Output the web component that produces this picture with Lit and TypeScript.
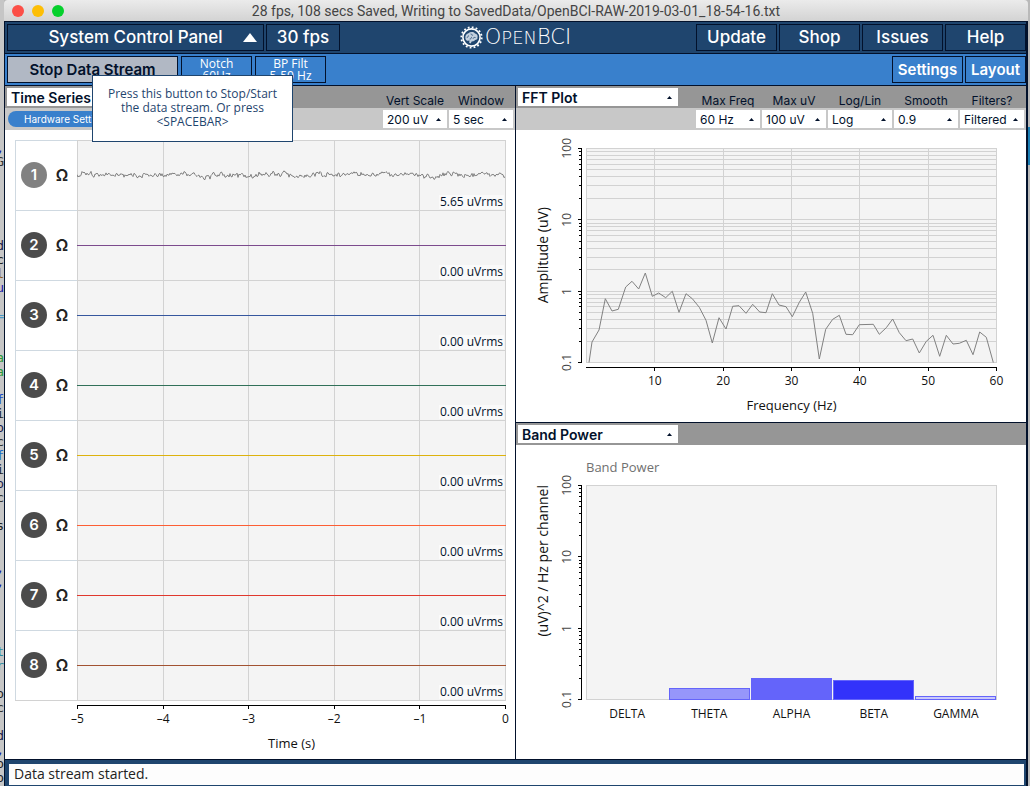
import { LitElement, html, svg, css, nothing } from "lit";
import { customElement } from "lit/decorators.js";

const shared = css`
  :host {
    --ink: #02112b;
    --navy: #1f456e;
    --blue: #3980cc;
    --rule: #d2d2d2;
    --display: Inter, "Open Sans", sans-serif;
    --body: "Open Sans", "Noto Sans", sans-serif;
    box-sizing: border-box;
  }
  *, *::before, *::after { box-sizing: border-box; }
  button, select { font: inherit; color: inherit; margin: 0; border-radius: 0; }
  svg { display: block; }
  .bar {
    display: flex;
    justify-content: space-between;
    height: 22px;
    padding: 2px;
    background: #969696;
    font: 12px/22px var(--display);
    color: var(--ink);
  }
  .bar.low { background: #c8c8c8; }
  .group { display: flex; gap: 2px; }
  .group label { width: 64px; text-align: center; line-height: 25px; white-space: nowrap; }
  .pick { display: grid; width: 64px; height: 18px; background: #fff; }
  .pick select {
    grid-area: 1 / 1;
    width: 100%;
    height: 18px;
    padding: 1px 0 0 4px;
    border: 0;
    background: none;
    appearance: none;
    font: 12px/17px var(--display);
  }
  .pick.wide { width: 160px; }
  .pick.wide select { font: 600 14px/17px var(--display); }
  .pick svg { grid-area: 1 / 1; place-self: center end; margin-right: 6px; pointer-events: none; }
  .ticks { display: flex; justify-content: space-between; font: 500 12px/16px var(--body); color: #111; }
  .ticks span { display: flex; justify-content: center; width: 1px; white-space: nowrap; }
  .axis-title { text-align: center; font: 13px/16px var(--body); color: #111; white-space: nowrap; }
  .plot { width: 100%; height: 100%; min-height: 0; overflow: hidden; }
  .chart {
    flex: 1;
    min-height: 0;
    display: grid;
    grid-template-columns: 24px 19px 8px minmax(0, 1fr);
    grid-template-rows: minmax(0, 1fr) auto;
    padding: 18px 29px 9px 19px;
  }
  .vertical { writing-mode: vertical-rl; transform: rotate(180deg); }
  .chart .axis-title.vertical { width: 16px; place-self: center start; font-size: 14px; }
  .y-ticks {
    display: flex;
    flex-direction: column;
    justify-content: space-between;
    width: 16px;
    font: 12px/16px var(--body);
    color: #444;
  }
  .y-ticks div { display: flex; align-items: center; height: 1px; }
  .below { grid-column: 4; display: flex; flex-direction: column; }
  .below .ruler { width: 100%; height: 4px; margin: 4px 0 2px; }
  .below .axis-title { margin-top: 8px; }
`;

const caret = html`<svg width="5" height="3" viewBox="0 0 5 3"><path d="M0 3 L2.5 0 L5 3z" fill="#02112b"/></svg>`;

const pick = (id: string, name: string, options: string[], wide = false) => html`
  <div class="pick ${wide ? "wide" : ""}">
    <select id=${id} aria-label=${name}>${options.map((o) => html`<option>${o}</option>`)}</select>
    ${caret}
  </div>`;

const WIDGETS = ["Time Series", "FFT Plot", "Band Power"];
const widgetPick = (current: string) =>
  pick("widget", "Widget", [current, ...WIDGETS.filter((w) => w !== current)], true);

const PLOT_W = 410;
const PLOT_H = 214;
const logY = (v: number) => 0.5 + (PLOT_H * (2 - Math.log10(v))) / 3;
const logSteps: { y: number; major: boolean }[] = [];
for (const decade of [0.1, 1, 10]) {
  for (let n = 1; n < 10; n++) logSteps.push({ y: logY(decade * n), major: n === 1 });
}
logSteps.push({ y: logY(100), major: true });

const logAxis = html`
  <div class="y-ticks">
    ${["100", "10", "1", "0.1"].map((t) => html`<div><span class="vertical">${t}</span></div>`)}
  </div>
  <svg width="4" height="100%" viewBox="0 0 4 215" preserveAspectRatio="none" shape-rendering="crispEdges" stroke="#000">
    <line x1="3.5" x2="3.5" y1="0" y2="215"/>
    ${logSteps.map((s) => svg`<line x1=${s.major ? 0 : 1} x2="4" y1=${s.y} y2=${s.y}/>`)}
  </svg>`;

const ruler = (width: number, at: number[]) => html`
  <svg class="ruler" viewBox="0 0 ${width} 4" preserveAspectRatio="none" shape-rendering="crispEdges" stroke="#000">
    <line x1="0" x2=${width} y1="0.5" y2="0.5"/>
    ${at.map((x) => svg`<line x1=${x} x2=${x} y1="0" y2="4"/>`)}
  </svg>`;

const CHANNELS = [
  { color: "#818181", rms: "5.65", on: true },
  { color: "#7c4b8d", rms: "0.00" },
  { color: "#36579e", rms: "0.00" },
  { color: "#317159", rms: "0.00" },
  { color: "#ddb20d", rms: "0.00" },
  { color: "#fd5e34", rms: "0.00" },
  { color: "#e0382d", rms: "0.00" },
  { color: "#a25231", rms: "0.00" },
];

const noise = (() => {
  let seed = 7;
  const rnd = () => {
    seed = (seed * 1103515245 + 12345) % 2147483648;
    return seed / 2147483648 - 0.5;
  };
  const pts: string[] = [];
  let drift = 0;
  for (let x = 0; x <= 428; x += 1) {
    drift = drift * 0.7 + rnd() * 3;
    const start = x > 2 && x < 14 ? -1.5 : 0;
    pts.push(`${x},${(34 + start + drift + rnd() * 3.4).toFixed(1)}`);
  }
  return pts.join(" ");
})();

@customElement("time-series")
export class TimeSeries extends LitElement {
  static styles = [shared, css`
    :host { display: flex; flex-direction: column; min-height: 0; background: #fff; }
    .hardware {
      width: 130px;
      height: 16px;
      margin: 1px;
      padding: 0 0 0 16px;
      border: 0;
      border-radius: 8px;
      background: var(--blue);
      color: #fff;
      font: 10px/16px var(--display);
      text-align: left;
    }
    .body { flex: 1; min-height: 0; display: flex; flex-direction: column; padding: 10px 9px 8px 10px; }
    .rows { flex: 1; min-height: 0; display: flex; flex-direction: column; border-bottom: 1px solid var(--rule); }
    .row { flex: 1; min-height: 0; display: grid; grid-template-columns: 62px minmax(0, 1fr); }
    .head {
      display: flex;
      align-items: center;
      gap: 7px;
      padding: 0 0 2px 5px;
      border: solid #cfd9e1;
      border-width: 1px 0 0 1px;
    }
    .dot {
      width: 26px;
      height: 26px;
      padding: 0;
      border: 0;
      border-radius: 50%;
      background: #4b4b4b;
      color: #fff;
      font: 600 15px/26px var(--display);
      text-align: center;
    }
    .dot.on { background: #818181; }
    .ohm { width: 16px; padding: 0; border: 0; background: none; font: 600 16px/20px var(--display); color: #222; }
    .trace { display: grid; grid-template: minmax(0, 1fr) / minmax(0, 1fr); border-top: 1px solid var(--rule); background: #f4f4f4; }
    .trace > * { grid-area: 1 / 1; }
    .rms {
      place-self: end;
      margin: 0 2px 1px 0;
      padding: 0 1px;
      background: #fafafa;
      font: 12px/14px var(--body);
      color: var(--ink);
    }
    .below { margin-left: 62px; }
    .below .axis-title { font-weight: 500; }
  `];

  render() {
    const at = [0, 1, 2, 3, 4, 5].map((n) => 0.5 + n * 85.6);
    return html`
      <div class="bar">
        ${widgetPick("Time Series")}
        <div class="group"><label for="scale">Vert Scale</label><label for="window">Window</label></div>
      </div>
      <div class="bar low">
        <button class="hardware">Hardware Settings</button>
        <div class="group">
          ${pick("scale", "Vert Scale", ["200 uV", "50 uV", "100 uV", "400 uV"])}
          ${pick("window", "Window", ["5 sec", "1 sec", "3 sec", "7 sec"])}
        </div>
      </div>
      <div class="body">
        <div class="rows">
          ${CHANNELS.map((c, i) => html`
            <div class="row">
              <div class="head">
                <button class="dot ${c.on ? "on" : ""}">${i + 1}</button>
                <button class="ohm">Ω</button>
              </div>
              <div class="trace">
                <svg class="plot" viewBox="0 0 429 69" preserveAspectRatio="none">
                  <g stroke="#d2d2d2" shape-rendering="crispEdges">
                    ${at.map((x) => svg`<line x1=${x} x2=${x} y1="0" y2="69"/>`)}
                  </g>
                  ${c.on
                    ? svg`<polyline points=${noise} fill="none" stroke=${c.color}/>`
                    : svg`<line x1="0" x2="429" y1="34.5" y2="34.5" stroke=${c.color} shape-rendering="crispEdges"/>`}
                </svg>
                <span class="rms">${c.rms} uVrms</span>
              </div>
            </div>`)}
        </div>
        <div class="below">
          ${ruler(429, at)}
          <div class="ticks">${["–5", "–4", "–3", "–2", "–1", "0"].map((t) => html`<span>${t}</span>`)}</div>
          <div class="axis-title">Time (s)</div>
        </div>
      </div>`;
  }
}

const SPECTRUM = "3,214.5 6,194 13,182 19.3,150.7 26,163 32.3,161.3 39.7,139 46,133.3 52.7,141 59.3,125 66.3,148.3 72.7,145 79.7,149.7 86.3,143.3 93,164.3 100,145.7 106.3,150.7 113.3,159.3 120,172.3 126.3,195 133,169.7 140,181 146.7,158.3 153,157.7 160,165.3 166.7,156.3 173.7,164 180,164.7 186.3,145.7 193,157 200,158.7 206.3,168.7 213.3,154.3 219.7,144 226.7,165.3 233.3,211 239.7,181.3 246.7,171.3 253.3,167.3 260,186.3 266.7,186.7 273.3,176.7 287.3,176.3 293.3,186.3 300.3,179.7 306.7,171 313.3,184.7 320,192.7 326.7,191 333.3,205 340.3,193.3 347,187.3 353.7,208.3 360.3,187.3 367,196 373.3,195.3 380.3,192.3 387,206.7 393.7,184 400.3,189.3 407.3,214.5";

@customElement("fft-plot")
export class FftPlot extends LitElement {
  static styles = [shared, css`
    :host { display: flex; flex-direction: column; min-height: 0; background: #fff; }
  `];

  render() {
    const at = [1, 2, 3, 4, 5, 6].map((n) => 0.5 + (n * PLOT_W) / 6);
    const menus: [string, string, string[]][] = [
      ["freq", "Max Freq", ["60 Hz", "20 Hz", "40 Hz", "120 Hz"]],
      ["uv", "Max uV", ["100 uV", "10 uV", "50 uV", "1000 uV"]],
      ["log", "Log/Lin", ["Log", "Linear"]],
      ["smooth", "Smooth", ["0.9", "0.0", "0.5", "0.75"]],
      ["filters", "Filters?", ["Filtered", "Unfilt."]],
    ];
    return html`
      <div class="bar">
        ${widgetPick("FFT Plot")}
        <div class="group">${menus.map(([id, name]) => html`<label for=${id}>${name}</label>`)}</div>
      </div>
      <div class="bar low">
        <span></span>
        <div class="group">${menus.map(([id, name, options]) => pick(id, name, options))}</div>
      </div>
      <div class="chart">
        <div class="axis-title vertical">Amplitude (uV)</div>
        ${logAxis}
        <svg class="plot" viewBox="0 0 411 215" preserveAspectRatio="none">
          <g stroke="#d2d2d2" shape-rendering="crispEdges">
            <rect x="0.5" y="0.5" width=${PLOT_W} height=${PLOT_H} fill="#f4f4f4"/>
            ${logSteps.map((s) => svg`<line x1="0" x2="411" y1=${s.y} y2=${s.y}/>`)}
            ${at.map((x) => svg`<line x1=${x} x2=${x} y1="0" y2="215"/>`)}
          </g>
          <polyline points=${SPECTRUM} fill="none" stroke="#818181"/>
        </svg>
        <div class="below">
          ${ruler(411, at)}
          <div class="ticks">
            <span></span>${[10, 20, 30, 40, 50, 60].map((t) => html`<span>${t}</span>`)}
          </div>
          <div class="axis-title">Frequency (Hz)</div>
        </div>
      </div>`;
  }
}

const BANDS = [
  { name: "DELTA", top: 214, fill: "" },
  { name: "THETA", top: 203, fill: "#9696fa" },
  { name: "ALPHA", top: 193, fill: "#6464fa" },
  { name: "BETA", top: 195, fill: "#3232fa" },
  { name: "GAMMA", top: 211, fill: "#c8c8fa" },
];

@customElement("band-power")
export class BandPower extends LitElement {
  static styles = [shared, css`
    :host { display: flex; flex-direction: column; min-height: 0; background: #fff; }
    .chart { grid-template-rows: 40px minmax(0, 1fr) auto; padding-top: 0; padding-bottom: 37px; }
    .chart .axis-title.vertical { align-self: start; }
    .title { grid-column: 4; padding-top: 14px; font: 13px/16px var(--body); color: #707070; }
    .names { display: grid; grid-template-columns: repeat(5, 1fr); margin-top: 6px; font: 12px/16px var(--body); color: #111; text-align: center; }
  `];

  render() {
    return html`
      <div class="bar">${widgetPick("Band Power")}</div>
      <div class="chart">
        <div class="title">Band Power</div>
        <div class="axis-title vertical">(uV)^2 / Hz per channel</div>
        ${logAxis}
        <svg class="plot" viewBox="0 0 411 215" preserveAspectRatio="none" shape-rendering="crispEdges">
          <rect x="0.5" y="0.5" width=${PLOT_W} height=${PLOT_H} fill="#f4f4f4" stroke="#d2d2d2"/>
          ${BANDS.map((b, i) => b.fill
            ? svg`<rect x=${i * 82 + 1.5} y=${b.top + 0.5} width="80" height=${PLOT_H - b.top} fill=${b.fill} stroke="#6464fa"/>`
            : nothing)}
        </svg>
        <div class="below names">${BANDS.map((b) => html`<span>${b.name}</span>`)}</div>
      </div>`;
  }
}

/* Editor text showing past the left edge of the window, one entry per 14px line. */
const EDITOR: Record<number, [string, string]> = {
  0: [",", "#1a1aa6"], 1: ["G", "#333"], 7: ["d", "#1a1a4a"], 8: ["c", "#222"], 9: ["l", "#8a5a1a"],
  10: ["u", "#1a1aa6"], 12: ["=", "#4a9ac8"], 15: ["a", "#2a9a3a"], 16: ["a", "#2a9a3a"], 18: ["f", "#1a4ac8"],
  19: ["i", "#222"], 20: ["o", "#1a1a4a"], 21: ["c", "#333"], 22: ["f", "#1a6ac8"], 23: ["i", "#222"],
  24: ["o", "#1a1a4a"], 25: ["c", "#333"], 27: ["s", "#222"], 30: [",", "#1a1aa6"], 31: [",", "#1a1aa6"],
  36: ["t", "#2a8aa0"], 37: ["r", "#2a8aa0"], 39: ["o", "#222"], 40: ["c", "#333"], 42: ["d", "#1a1a4a"],
  43: [",", "#1a1aa6"], 44: ["o", "#222"], 45: ["o", "#222"],
};

@customElement("app-root")
export class AppRoot extends LitElement {
  static styles = [shared, css`
    :host {
      display: grid;
      grid-template-columns: 4px minmax(0, 1fr) 2px;
      height: 100vh;
      min-height: 600px;
      overflow: hidden;
      background: #b9b9b9;
    }
    .editor {
      padding-top: 141px;
      overflow: hidden;
      background: #c6c6c6;
      font: 13px/14px "DejaVu Sans Mono", monospace;
    }
    .editor div { display: flex; justify-content: flex-end; height: 14px; }
    .edge { display: flex; flex-direction: column; padding-top: 127px; }
    .edge span { height: 38px; background: #1b7fb5; }
    .window { display: flex; flex-direction: column; min-height: 0; }
    .titlebar {
      display: grid;
      grid-template-columns: 54px 1fr 54px;
      align-items: center;
      height: 21px;
      padding: 0 8px;
      border-radius: 4px 4px 0 0;
      background: linear-gradient(#ebebeb, #d3d3d3);
      font: 14px/20px Roboto, sans-serif;
      color: #444;
      text-align: center;
      white-space: nowrap;
    }
    .lights { display: flex; gap: 8px; }
    .lights button { width: 12px; height: 12px; padding: 0; border: 0; border-radius: 50%; }
    .close { background: #fc4f47; }
    .min { background: #fdbe05; }
    .max { background: #05d02c; }
    .frame {
      flex: 1;
      min-height: 0;
      display: flex;
      flex-direction: column;
      border: solid var(--ink);
      border-width: 1px 2px 0 1px;
    }
    .nav {
      position: relative;
      display: flex;
      gap: 2px;
      height: 32px;
      padding: 2px 0 2px 2px;
      border-bottom: 1px solid var(--ink);
      background: var(--navy);
      color: #fff;
      font: 500 17px/25px var(--display);
    }
    .nav.sub { gap: 3px; background: var(--blue); font: 600 15px/25px var(--display); }
    .nav button { height: 27px; padding: 0; border: 1px solid var(--ink); background: none; text-align: center; white-space: nowrap; }
    .nav .panel { display: grid; grid-template-columns: 1fr; width: 257px; }
    .panel > * { grid-area: 1 / 1; }
    .panel svg { place-self: center end; margin-right: 6px; }
    .nav .fps { width: 74px; }
    .nav .link { width: 81px; }
    .push { flex: 1; }
    .nav .stop { width: 171px; background: #b1b8c4; color: var(--ink); }
    .nav .filter { width: 71px; font: 12px/12px var(--body); }
    .nav .settings { width: 71px; }
    .nav .layout { width: 61px; }
    .tail { display: flex; gap: 2px; }
    .logo {
      position: absolute;
      inset: 0;
      display: flex;
      align-items: center;
      justify-content: center;
      gap: 2px;
      pointer-events: none;
      font: 200 21px/30px "DejaVu Sans", sans-serif;
      text-transform: uppercase;
    }
    .logo small { font-size: 18px; }
    .tip {
      position: absolute;
      z-index: 1;
      left: 87px;
      top: 21px;
      width: 201px;
      padding: 11px 12px 12px;
      border: 1px solid var(--navy);
      background: #fff;
      color: var(--navy);
      font: 12px/14px var(--body);
      text-align: center;
    }
    .content {
      flex: 1;
      min-height: 0;
      display: grid;
      grid-template-columns: repeat(2, minmax(0, 1fr));
      gap: 1px;
      background: var(--ink);
    }
    .stack { display: grid; grid-template-rows: repeat(2, minmax(0, 1fr)); gap: 1px; min-height: 0; }
    .status { padding: 4px 2px 1px 4px; border-top: 1px solid var(--ink); background: var(--navy); }
    .message { padding: 0 0 2px 5px; background: #fdfdfd; font: 14px/19px var(--body); color: #222; }
  `];

  render() {
    return html`
      <div class="editor" aria-hidden="true">
        ${Array.from({ length: 46 }, (_, i) => EDITOR[i]
          ? html`<div style="color:${EDITOR[i][1]}">${EDITOR[i][0]}</div>`
          : html`<div></div>`)}
      </div>
      <div class="window">
        <div class="titlebar">
          <div class="lights">
            <button class="close" aria-label="Close"></button>
            <button class="min" aria-label="Minimize"></button>
            <button class="max" aria-label="Zoom"></button>
          </div>
          <span>28 fps, 108 secs Saved, Writing to SavedData/OpenBCI-RAW-2019-03-01_18-54-16.txt</span>
        </div>
        <div class="frame">
          <nav class="nav">
            <div class="logo">
              <svg width="23" height="23" viewBox="0 0 23 23" fill="none" stroke="#fff">
                <circle cx="11.5" cy="11.5" r="8.6" stroke-width="1.6"/>
                <circle cx="11.5" cy="11.5" r="10.2" stroke-width="1.8" stroke-dasharray="1.8 2.2"/>
                <path d="M5.4 12.4c-.4-2.6.8-4.600 3-5.200 2-1.700 5.200-1.600 6.600.2 2.100.4 3 2.200 2.500 3.800.3 1.800-.8 2.800-2.500 2.800-.8 1.400-2.100 1.600-3.100 1.300l-1.300 2.300-1.400-.9.3-2.100c-2.100.5-3.800-.2-4.100-2.200z" fill="#c3d0de" stroke="none"/>
                <path d="M6.800 11.500c1-.2 1.700-1 1.700-2M9.700 13c1.400 0 1.900-1 1.700-2.100M11 7.600c0 1.200 1 1.700 2.100 1.500M13 12.600c.3-1 1.400-1.400 2.500-1.100" stroke="#1f456e" stroke-width=".8"/>
              </svg>
              <span>O<small>pen</small>BCI</span>
            </div>
            <button class="panel">
              <span>System Control Panel</span>
              <svg width="14" height="9" viewBox="0 0 14 9"><path d="M0 9 7 0l7 9z" fill="#fff"/></svg>
            </button>
            <button class="fps">30 fps</button>
            <span class="push"></span>
            ${["Update", "Shop", "Issues", "Help"].map((t) => html`<button class="link">${t}</button>`)}
          </nav>
          <nav class="nav sub">
            <button class="stop" aria-describedby="tip">Stop Data Stream</button>
            <button class="filter">Notch<br>60Hz</button>
            <button class="filter">BP Filt<br>5-50 Hz</button>
            <span class="push"></span>
            <div class="tail">
              <button class="settings">Settings</button>
              <button class="layout">Layout</button>
            </div>
            <div class="tip" id="tip" role="tooltip">Press this button to Stop/Start the data stream. Or press &lt;SPACEBAR&gt;</div>
          </nav>
          <main class="content">
            <time-series></time-series>
            <div class="stack">
              <fft-plot></fft-plot>
              <band-power></band-power>
            </div>
          </main>
          <footer class="status"><div class="message" role="status">Data stream started.</div></footer>
        </div>
      </div>
      <div class="edge" aria-hidden="true"><span></span></div>`;
  }
}
